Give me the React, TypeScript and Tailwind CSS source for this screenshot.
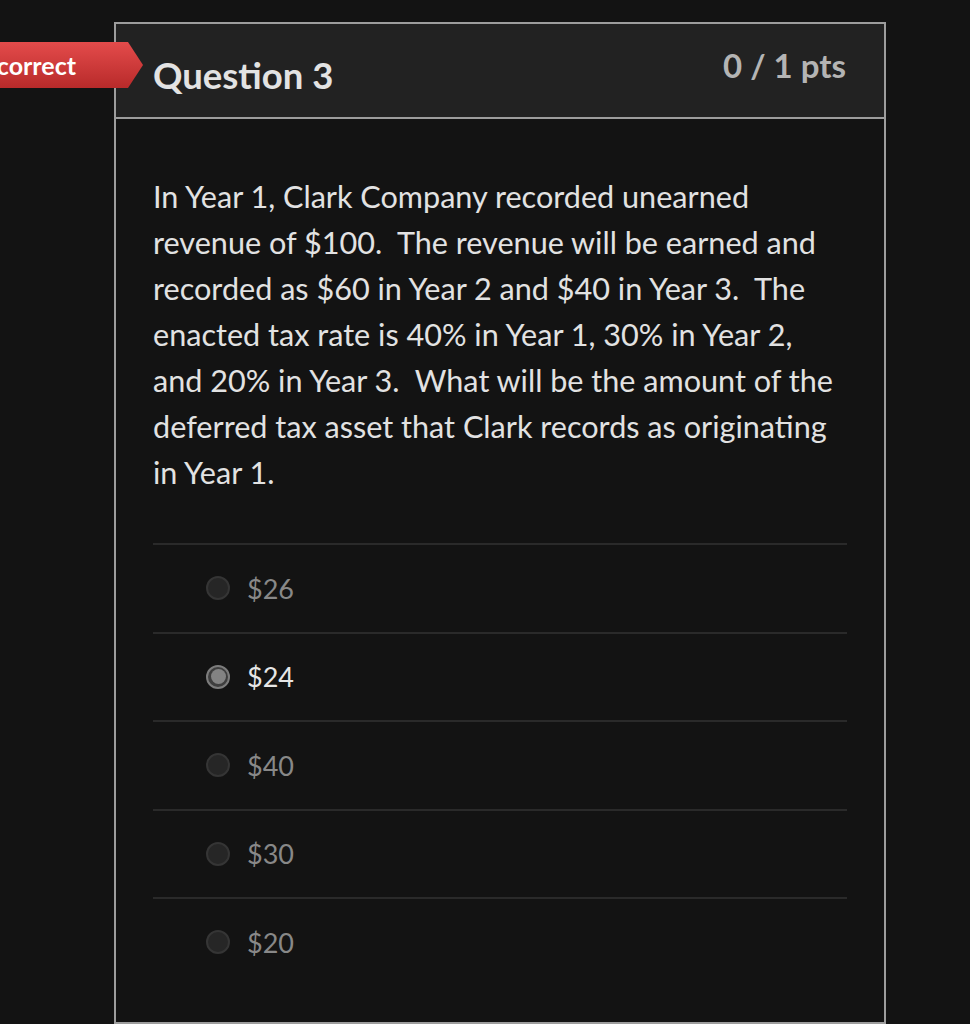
import { useState } from 'react';

const options = ['$26', '$24', '$40', '$30', '$20'];

export default function App() {
  const [selected, setSelected] = useState(1);

  return (
    <div className="relative min-h-screen overflow-hidden bg-[#131313] font-['Lato','Noto_Sans',sans-serif]">
      {/* Result ribbon, partly off the left edge. */}
      <div className="absolute left-0 top-[42px] z-10 flex h-[46px] w-[143px] items-center justify-end bg-gradient-to-b from-[#e44b4b] to-[#b82a2a] pr-[67px] [clip-path:polygon(0_0,128px_0,143px_50%,128px_100%,0_100%)]">
        <span className="whitespace-nowrap text-[25px] font-bold leading-none text-white">Incorrect</span>
      </div>

      <div className="pl-[114px] pt-[22px]">
        <div className="flex h-[1002px] w-[772px] flex-col border-2 border-[#9d9d9d] bg-[#131313]">
          <div className="flex h-[95px] shrink-0 items-start justify-between border-b-2 border-[#9d9d9d] bg-[#222222] pl-[37px] pr-[38px]">
            <h2 className="pt-[31px] text-[36.5px] font-bold leading-[40px] text-[#e3e3e3]">Question 3</h2>
            <div className="pt-[21px] text-[33px] font-bold leading-[40px] text-[#b4b4b4]">0 / 1 pts</div>
          </div>

          <div className="px-[37px] pt-[55px]">
            <p className="whitespace-pre-wrap text-[30.6px] leading-[46px] text-[#e2e2e2]">
              In Year 1, Clark Company recorded unearned
              <br />
              revenue of $100.  The revenue will be earned and
              <br />
              recorded as $60 in Year 2 and $40 in Year 3.  The
              <br />
              enacted tax rate is 40% in Year 1, 30% in Year 2,
              <br />
              and 20% in Year 3.  What will be the amount of the
              <br />
              deferred tax asset that Clark records as originating
              <br />
              in Year 1.
            </p>

            <div className="mt-[47px]">
              {options.map((opt, i) => {
                const on = i === selected;
                return (
                  <label
                    key={opt}
                    onClick={() => setSelected(i)}
                    className="flex h-[88.5px] cursor-pointer items-center border-t-2 border-[#2a2a2a] pl-[53px]"
                  >
                    {on ? (
                      <span className="flex h-[24px] w-[24px] items-center justify-center rounded-full border-2 border-[#7c7c7c] bg-[#3e3e3e]">
                        <span className="h-[15px] w-[15px] rounded-full bg-[#838383]" />
                      </span>
                    ) : (
                      <span className="h-[24px] w-[24px] rounded-full border-2 border-[#353535] bg-[#262626]" />
                    )}
                    <span
                      className={
                        on
                          ? 'ml-[17px] text-[27px] leading-none text-[#e6e6e6]'
                          : 'ml-[17px] text-[27px] leading-none text-[#888888]'
                      }
                    >
                      {opt}
                    </span>
                  </label>
                );
              })}
            </div>
          </div>
        </div>
      </div>
    </div>
  );
}
